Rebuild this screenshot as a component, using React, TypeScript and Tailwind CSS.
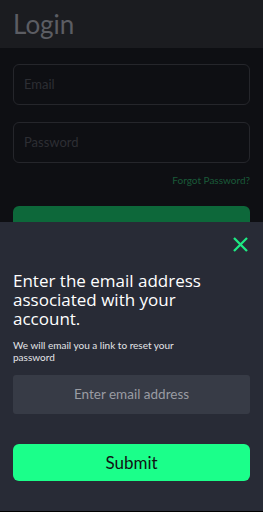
export default function App() {
  return (
    <div
      className="relative flex h-[512px] w-[263px] flex-col overflow-hidden bg-[#0e0f13]"
      style={{ fontFamily: "Lato, 'Open Sans', sans-serif" }}
    >
      <header className="flex h-[48px] items-center bg-[#1b1c20] px-[13px]">
        <h1 className="text-[26px] leading-none text-[#5c5d63]">Login</h1>
      </header>

      <main className="flex flex-col px-[13px] pt-[16px]">
        <div className="flex h-[41px] items-center rounded-[6px] border border-[#25262b] px-[10px] text-[13px] text-[#2d2e33]">
          Email
        </div>
        <div className="mt-[17px] flex h-[41px] items-center rounded-[6px] border border-[#25262b] px-[10px] text-[13px] text-[#2d2e33]">
          Password
        </div>
        <div className="mt-[10px] text-right text-[10px] text-[#1a5a39]">Forgot Password?</div>
        <div className="mt-[18px] h-[40px] rounded-[6px] bg-[#0d683a]" />
      </main>

      <section className="absolute inset-x-0 bottom-[1px] top-[222px] flex flex-col bg-[#282b36] px-[13px]">
        <div className="flex justify-end pt-[15px] pr-[2px]">
          <svg viewBox="0 0 15 15" className="h-[15px] w-[15px]" fill="none" stroke="#1ee983" strokeWidth="2.3" strokeLinecap="square">
            <path d="M1.8 1.8 13.2 13.2M13.2 1.8 1.8 13.2" />
          </svg>
        </div>
        <h2
          className="mt-[19px] w-[200px] text-[17px] leading-[19px] text-white"
          style={{ fontFamily: "'Open Sans', Lato, sans-serif" }}
        >
          Enter the email address associated with your account.
        </h2>
        <p className="mt-[11px] w-[190px] text-[10px] leading-[12px] text-[#e4e5e8]">
          We will email you a link to reset your password
        </p>
        <div className="mt-[12px] flex h-[39px] items-center justify-center rounded-[3px] bg-[#373b46] text-[13.5px] text-[#9a9ca3]">
          Enter email address
        </div>
        <button
          type="button"
          className="mt-[30px] flex h-[37px] items-center justify-center rounded-[6px] bg-[#1bff8a] text-[17px] text-[#111214]"
        >
          Submit
        </button>
      </section>
      <div className="absolute inset-x-0 bottom-0 h-[1px] bg-black" />
    </div>
  );
}
